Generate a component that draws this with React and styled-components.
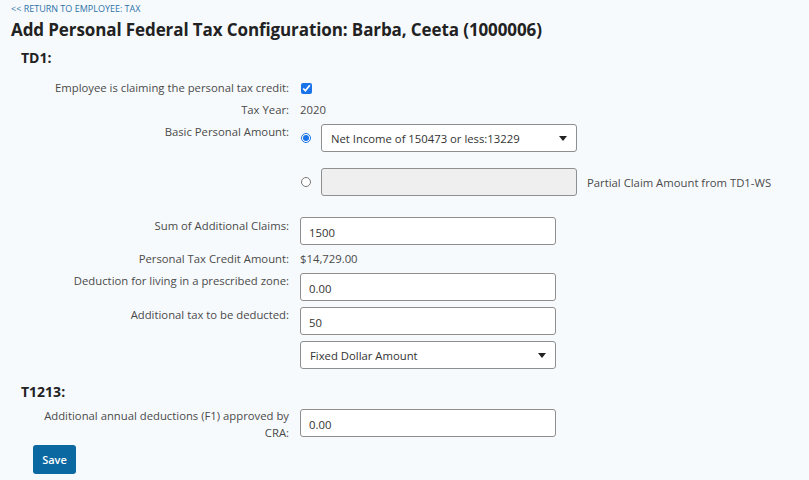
import React from 'react'
import styled, { createGlobalStyle, css } from 'styled-components'

const GlobalStyle = createGlobalStyle`
    html, body {
        margin: 0;
        background: #f7fafd;
    }
    body {
        font-family: "Open Sans", "Liberation Sans", sans-serif;
        color: #333;
    }
`

const Page = styled.div`
    padding: 3px 11px 0;
    min-height: 480px;
    box-sizing: border-box;
`

const BackLink = styled.a`
    display: block;
    font-size: 9px;
    line-height: 12px;
    color: #2f73a8;
    text-decoration: none;
    cursor: pointer;
`

const Title = styled.h1`
    margin: 4px 0 0;
    font-size: 17px;
    line-height: 22px;
    font-weight: 700;
    color: #222;
    letter-spacing: -0.1px;
`

const Section = styled.section`
    padding-left: 10px;
`

const SectionTitle = styled.h2`
    margin: ${ ( { $top } ) => $top || '7px' } 0 0;
    font-size: 14px;
    line-height: 20px;
    font-weight: 700;
    color: #222;
`

const Form = styled.div`
    display: grid;
    grid-template-columns: 250px 1fr;
    column-gap: 11px;
    row-gap: 6px;
    margin-top: ${ ( { $top } ) => $top || '0' };
    margin-left: 18px;
`

const Label = styled.div`
    text-align: right;
    font-size: 11.3px;
    line-height: ${ ( { $lh } ) => $lh || '16px' };
    color: #4a4a4a;
    padding-top: ${ ( { $pad } ) => $pad || '0' };
`

const Value = styled.div`
    font-size: 11.3px;
    line-height: 16px;
    color: #4a4a4a;
    display: flex;
    align-items: center;
`

const Field = styled.div`
    display: flex;
    flex-direction: column;
    gap: ${ ( { $gap } ) => $gap || '6px' };
    padding-bottom: ${ ( { $bottom } ) => $bottom || '0' };
`

const Check = styled.input`
    margin: 0 0 0 1px;
    width: 11px;
    height: 11px;
    accent-color: #1a73e8;
`

const RadioRow = styled.div`
    display: flex;
    align-items: center;
    gap: 10px;
`

const Radio = styled.input`
    margin: 0 0 0 1px;
    width: 10px;
    height: 10px;
    accent-color: #1a73e8;
`

const boxStyle = css`
    box-sizing: border-box;
    width: ${ ( { $w } ) => $w || '256px' };
    height: 28px;
    border: 1px solid #8f8f8f;
    border-radius: 3px;
    background: ${ ( { $disabled } ) => $disabled ? '#efefef' : '#fff' };
    font-family: inherit;
    font-size: 11.3px;
    color: #333;
    padding: 0 8px;
`

const TextBox = styled.input`
    ${ boxStyle }
    outline: none;
    padding-top: 2px;
    margin-top: ${ ( { $top } ) => $top || '0' };
`

const SelectBox = styled.div`
    ${ boxStyle }
    display: flex;
    align-items: center;
    justify-content: space-between;
    padding: 0 9px;
`

const Caret = styled.span`
    width: 0;
    height: 0;
    border-left: 4px solid transparent;
    border-right: 4px solid transparent;
    border-top: 5px solid #222;
`

const Hint = styled.span`
    font-size: 11.3px;
    color: #4a4a4a;
`

const SaveButton = styled.button`
    margin: 4px 0 0 22px;
    width: 43px;
    height: 29px;
    border: none;
    border-radius: 3px;
    background: #0b68a1;
    color: #fff;
    font-family: inherit;
    font-size: 11px;
    font-weight: 600;
    cursor: pointer;
`

export default function App() {
    return (
        <Page>
            <GlobalStyle />
            <BackLink>&lt;&lt; RETURN TO EMPLOYEE: TAX</BackLink>
            <Title>Add Personal Federal Tax Configuration: Barba, Ceeta (1000006)</Title>

            <Section>
                <SectionTitle>TD1:</SectionTitle>
                <Form $top="12px">
                    <Label>Employee is claiming the personal tax credit:</Label>
                    <Value><Check type="checkbox" defaultChecked /></Value>

                    <Label>Tax Year:</Label>
                    <Value>2020</Value>

                    <Label>Basic Personal Amount:</Label>
                    <Field $gap="16px" $bottom="15px">
                        <RadioRow>
                            <Radio type="radio" name="bpa" defaultChecked />
                            <SelectBox>
                                <span>Net Income of 150473 or less:13229</span>
                                <Caret />
                            </SelectBox>
                        </RadioRow>
                        <RadioRow>
                            <Radio type="radio" name="bpa" />
                            <TextBox $disabled disabled />
                            <Hint>Partial Claim Amount from TD1-WS</Hint>
                        </RadioRow>
                    </Field>

                    <Label $pad="1px">Sum of Additional Claims:</Label>
                    <TextBox defaultValue="1500" />

                    <Label>Personal Tax Credit Amount:</Label>
                    <Value>$14,729.00</Value>

                    <Label>Deduction for living in a prescribed zone:</Label>
                    <TextBox defaultValue="0.00" />

                    <Label>Additional tax to be deducted:</Label>
                    <Field>
                        <TextBox defaultValue="50" />
                        <SelectBox>
                            <span>Fixed Dollar Amount</span>
                            <Caret />
                        </SelectBox>
                    </Field>
                </Form>

                <SectionTitle $top="13px">T1213:</SectionTitle>
                <Form $top="5px">
                    <Label $lh="17px">Additional annual deductions (F1) approved by CRA:</Label>
                    <TextBox $top="2px" defaultValue="0.00" />
                </Form>
            </Section>

            <SaveButton>Save</SaveButton>
        </Page>
    )
}
